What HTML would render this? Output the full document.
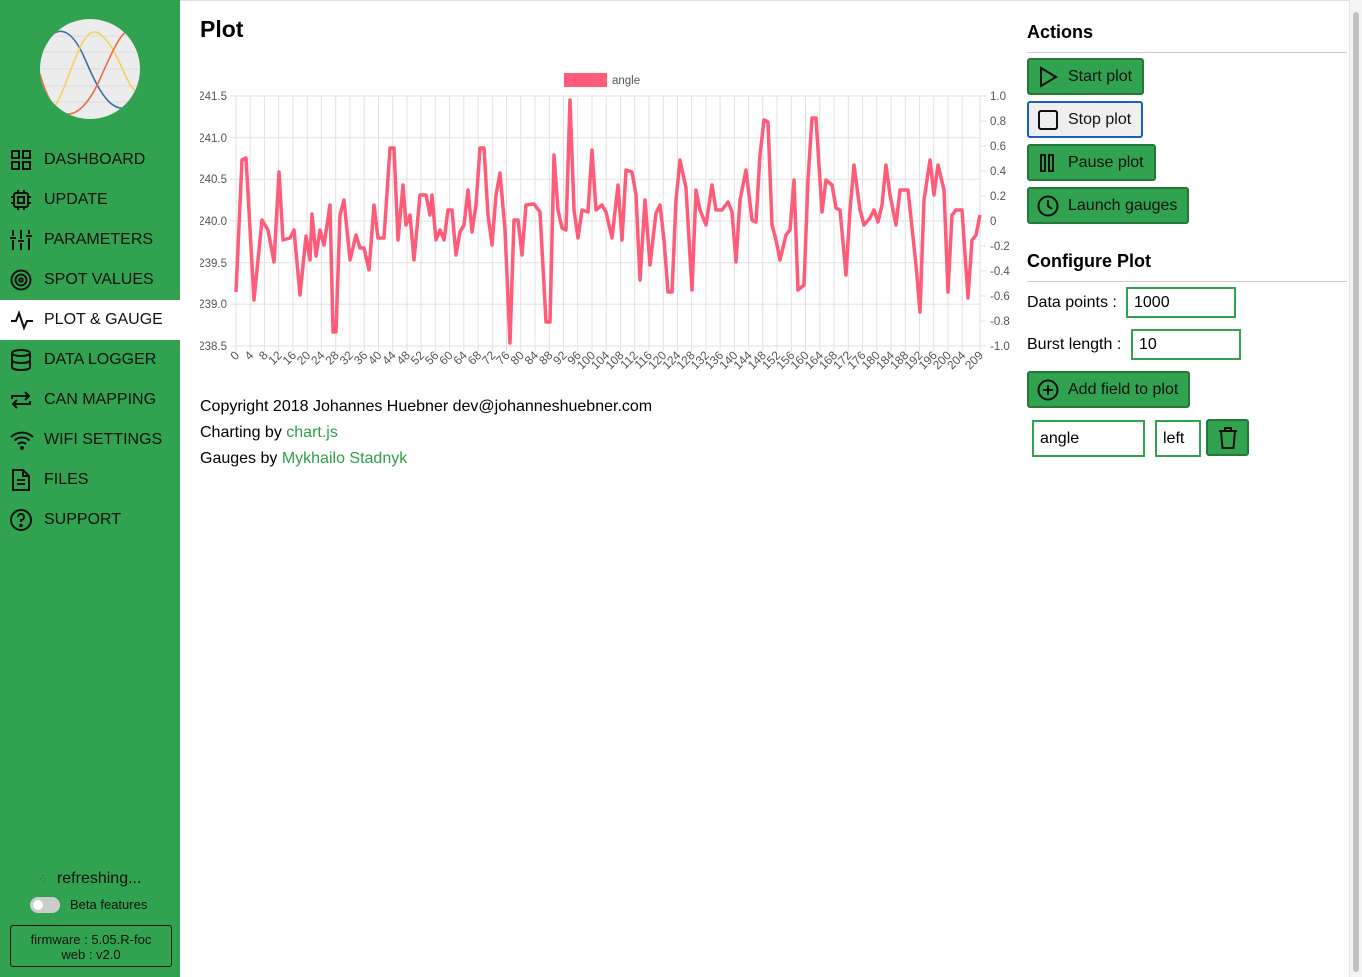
<!DOCTYPE html>
<html><head><meta charset="utf-8"><style>
*{box-sizing:border-box;margin:0;padding:0}
body{width:1362px;height:977px;overflow:hidden;background:#fff;font-family:"Liberation Sans",sans-serif;color:#000;position:relative}
#side{position:absolute;left:0;top:0;width:180px;height:977px;background:#31a350}
.logo{position:absolute;left:40px;top:19px;width:100px;height:100px;border-radius:50%;background:#ececec;overflow:hidden}
.nav{position:absolute;left:0;width:180px;height:40px;font-size:16px;line-height:40px;padding-left:44px;color:#111;white-space:nowrap}
.nav svg{position:absolute;left:10px;top:9px}
.nav.act{background:#fff}
a{color:#2e9e4a;text-decoration:none}
h1{position:absolute;left:200px;top:16px;font-size:23px;font-weight:bold}
h2{position:absolute;left:1027px;font-size:18px;font-weight:bold}
.hr{position:absolute;left:1027px;width:320px;height:1px;background:#ccc}
.btn{position:absolute;left:1027px;height:37px;background:#31a350;border:2px solid #25773a;border-radius:3px;font-size:16px;line-height:33px;padding-left:39px;color:#111;white-space:nowrap}
.btn svg{position:absolute;left:8px;top:6px}
.inp{position:absolute;height:31px;border:2px solid #31a350;font-size:16px;line-height:27px;padding-left:6px;background:#fff}
.lbl{position:absolute;font-size:16px}
.ft{position:absolute;left:200px;font-size:16px}
</style></head><body>
<div id="side">
 <div class="logo"><svg width="100" height="100" viewBox="0 0 100 100">
 <g stroke="#ddd" stroke-width="1"><line x1="0" y1="17" x2="100" y2="17"/><line x1="0" y1="33" x2="100" y2="33"/><line x1="0" y1="50" x2="100" y2="50"/><line x1="0" y1="67" x2="100" y2="67"/><line x1="0" y1="83" x2="100" y2="83"/></g>
 <path d="M0,30 C15,5 30,5 45,40 S75,105 100,80" fill="none" stroke="#3e6fa8" stroke-width="1.6"/>
 <path d="M10,95 C30,70 40,0 60,15 S85,70 100,75" fill="none" stroke="#f5d25a" stroke-width="1.6"/>
 <path d="M0,55 C15,110 40,105 60,60 S85,5 100,15" fill="none" stroke="#f06a4a" stroke-width="1.6"/>
 </svg></div>
 <div class="nav" style="top:140px"><svg width="22" height="22" viewBox="0 0 22 22" fill="none" stroke="#111" stroke-width="2"><rect x="2" y="2" width="7" height="7"/><rect x="13" y="2" width="7" height="7"/><rect x="2" y="13" width="7" height="7"/><rect x="13" y="13" width="7" height="7"/></svg>DASHBOARD</div>
 <div class="nav" style="top:180px"><svg width="22" height="22" viewBox="0 0 22 22" fill="none" stroke="#111" stroke-width="2"><rect x="4" y="4" width="14" height="14" rx="2"/><rect x="8" y="8" width="6" height="6"/><path d="M8 1v3M14 1v3M8 18v3M14 18v3M1 8h3M1 14h3M18 8h3M18 14h3"/></svg>UPDATE</div>
 <div class="nav" style="top:220px"><svg width="22" height="22" viewBox="0 0 22 22" fill="none" stroke="#111" stroke-width="2"><path d="M3 1v6M3 11v10M11 1v9M11 14v7M19 1v4M19 9v12M0 9h6M8 12h6M16 7h6"/></svg>PARAMETERS</div>
 <div class="nav" style="top:260px"><svg width="22" height="22" viewBox="0 0 22 22" fill="none" stroke="#111" stroke-width="2"><circle cx="11" cy="11" r="9.5"/><circle cx="11" cy="11" r="5.5"/><circle cx="11" cy="11" r="1.8"/></svg>SPOT VALUES</div>
 <div class="nav act" style="top:300px"><svg width="24" height="22" viewBox="0 0 24 22" fill="none" stroke="#111" stroke-width="2"><path d="M1 12h5l3-8 5 15 3-7h6"/></svg>PLOT &amp; GAUGE</div>
 <div class="nav" style="top:340px"><svg width="22" height="22" viewBox="0 0 22 22" fill="none" stroke="#111" stroke-width="2"><ellipse cx="11" cy="4" rx="9" ry="3"/><path d="M2 4v14c0 2 4 3 9 3s9-1 9-3V4M2 11c0 2 4 3 9 3s9-1 9-3"/></svg>DATA LOGGER</div>
 <div class="nav" style="top:380px"><svg width="22" height="22" viewBox="0 0 22 22" fill="none" stroke="#111" stroke-width="2"><path d="M2 10V7h17M15 3l4 4-4 4M20 12v3H3M7 19l-4-4 4-4"/></svg>CAN MAPPING</div>
 <div class="nav" style="top:420px"><svg width="24" height="22" viewBox="0 0 24 22" fill="none" stroke="#111" stroke-width="2"><path d="M1 8a16 16 0 0 1 22 0M4.5 11.5a11 11 0 0 1 15 0M8 15a6 6 0 0 1 8 0"/><circle cx="12" cy="19" r="1" fill="#111"/></svg>WIFI SETTINGS</div>
 <div class="nav" style="top:460px"><svg width="22" height="22" viewBox="0 0 22 22" fill="none" stroke="#111" stroke-width="2"><path d="M3 1h10l6 6v14H3zM13 1v6h6M7 11h8M7 15h8"/></svg>FILES</div>
 <div class="nav" style="top:500px"><svg width="22" height="22" viewBox="0 0 22 22" fill="none" stroke="#111" stroke-width="2"><circle cx="11" cy="11" r="10"/><path d="M8 8a3 3 0 1 1 3 3v2"/><circle cx="11" cy="16.5" r="0.8" fill="#111"/></svg>SUPPORT</div>
 <div style="position:absolute;left:38px;top:870px;font-size:16px;color:#111"><span style="font-size:12px;color:#555">⁘</span>&nbsp; refreshing...</div>
 <div style="position:absolute;left:30px;top:897px;width:30px;height:16px;border-radius:8px;background:#ccc"><div style="position:absolute;left:3px;top:3px;width:10px;height:10px;border-radius:50%;background:#fff"></div></div>
 <div style="position:absolute;left:70px;top:897px;font-size:13px;color:#111">Beta features</div>
 <div style="position:absolute;left:10px;top:925px;width:162px;height:42px;border:1px solid #111;border-radius:3px;font-size:13px;text-align:center;line-height:15px;padding-top:6px;color:#111">firmware : 5.05.R-foc<br>web : v2.0</div>
</div>
<div style="position:absolute;left:180px;top:0;width:1170px;height:1px;background:#ddd"></div>
<div style="position:absolute;left:1349px;top:0;width:13px;height:977px;background:#f5f5f5;border-left:1px solid #e5e5e5"><div style="position:absolute;left:3px;top:12px;width:6px;height:960px;border-radius:3px;background:#c2c2c2"></div></div>
<h1>Plot</h1>
<svg style="position:absolute;left:200px;top:60px" width="820" height="320" viewBox="200 60 820 320" font-family="Liberation Sans,sans-serif" font-size="11.5" fill="#555">
<rect x="564" y="73" width="43" height="14" fill="#ff5c7a"/><text x="612" y="84">angle</text>
<g stroke="#e2e2e2" stroke-width="1">
<line x1="236" y1="96" x2="980" y2="96"/><line x1="236" y1="137.7" x2="980" y2="137.7"/><line x1="236" y1="179.3" x2="980" y2="179.3"/><line x1="236" y1="221" x2="980" y2="221"/><line x1="236" y1="262.7" x2="980" y2="262.7"/><line x1="236" y1="304.3" x2="980" y2="304.3"/><line x1="236" y1="346" x2="980" y2="346"/>
<path d="M236 96V352M250.2 96V352M264.5 96V352M278.7 96V352M293 96V352M307.2 96V352M321.4 96V352M335.7 96V352M349.9 96V352M364.2 96V352M378.4 96V352M392.6 96V352M406.9 96V352M421.1 96V352M435.3 96V352M449.6 96V352M463.8 96V352M478.1 96V352M492.3 96V352M506.5 96V352M520.8 96V352M535 96V352M549.3 96V352M563.5 96V352M577.7 96V352M592 96V352M606.2 96V352M620.5 96V352M634.7 96V352M648.9 96V352M663.2 96V352M677.4 96V352M691.6 96V352M705.9 96V352M720.1 96V352M734.4 96V352M748.6 96V352M762.8 96V352M777.1 96V352M791.3 96V352M805.6 96V352M819.8 96V352M834 96V352M848.3 96V352M862.5 96V352M876.7 96V352M891 96V352M905.2 96V352M919.5 96V352M933.7 96V352M947.9 96V352M962.2 96V352M980 96V352"/>
<path d="M230 96h6M230 137.7h6M230 179.3h6M230 221h6M230 262.7h6M230 304.3h6M230 346h6M980 96h6M980 121h6M980 146h6M980 171h6M980 196h6M980 221h6M980 246h6M980 271h6M980 296h6M980 321h6M980 346h6"/>
</g>
<g text-anchor="end"><text x="227" y="100">241.5</text><text x="227" y="142">241.0</text><text x="227" y="183">240.5</text><text x="227" y="225">240.0</text><text x="227" y="267">239.5</text><text x="227" y="308">239.0</text><text x="227" y="350">238.5</text></g>
<g><text x="990" y="100">1.0</text><text x="990" y="125">0.8</text><text x="990" y="150">0.6</text><text x="990" y="175">0.4</text><text x="990" y="200">0.2</text><text x="990" y="225">0</text><text x="990" y="250">-0.2</text><text x="990" y="275">-0.4</text><text x="990" y="300">-0.6</text><text x="990" y="325">-0.8</text><text x="990" y="350">-1.0</text></g>
<g text-anchor="end" font-size="12">
<text transform="translate(240,356) rotate(-45)">0</text><text transform="translate(254.2,356) rotate(-45)">4</text><text transform="translate(268.5,356) rotate(-45)">8</text><text transform="translate(282.7,356) rotate(-45)">12</text><text transform="translate(297,356) rotate(-45)">16</text><text transform="translate(311.2,356) rotate(-45)">20</text><text transform="translate(325.4,356) rotate(-45)">24</text><text transform="translate(339.7,356) rotate(-45)">28</text><text transform="translate(353.9,356) rotate(-45)">32</text><text transform="translate(368.2,356) rotate(-45)">36</text><text transform="translate(382.4,356) rotate(-45)">40</text><text transform="translate(396.6,356) rotate(-45)">44</text><text transform="translate(410.9,356) rotate(-45)">48</text><text transform="translate(425.1,356) rotate(-45)">52</text><text transform="translate(439.3,356) rotate(-45)">56</text><text transform="translate(453.6,356) rotate(-45)">60</text><text transform="translate(467.8,356) rotate(-45)">64</text><text transform="translate(482.1,356) rotate(-45)">68</text><text transform="translate(496.3,356) rotate(-45)">72</text><text transform="translate(510.5,356) rotate(-45)">76</text><text transform="translate(524.8,356) rotate(-45)">80</text><text transform="translate(539,356) rotate(-45)">84</text><text transform="translate(553.3,356) rotate(-45)">88</text><text transform="translate(567.5,356) rotate(-45)">92</text><text transform="translate(581.7,356) rotate(-45)">96</text><text transform="translate(596,356) rotate(-45)">100</text><text transform="translate(610.2,356) rotate(-45)">104</text><text transform="translate(624.5,356) rotate(-45)">108</text><text transform="translate(638.7,356) rotate(-45)">112</text><text transform="translate(652.9,356) rotate(-45)">116</text><text transform="translate(667.2,356) rotate(-45)">120</text><text transform="translate(681.4,356) rotate(-45)">124</text><text transform="translate(695.6,356) rotate(-45)">128</text><text transform="translate(709.9,356) rotate(-45)">132</text><text transform="translate(724.1,356) rotate(-45)">136</text><text transform="translate(738.4,356) rotate(-45)">140</text><text transform="translate(752.6,356) rotate(-45)">144</text><text transform="translate(766.8,356) rotate(-45)">148</text><text transform="translate(781.1,356) rotate(-45)">152</text><text transform="translate(795.3,356) rotate(-45)">156</text><text transform="translate(809.6,356) rotate(-45)">160</text><text transform="translate(823.8,356) rotate(-45)">164</text><text transform="translate(838,356) rotate(-45)">168</text><text transform="translate(852.3,356) rotate(-45)">172</text><text transform="translate(866.5,356) rotate(-45)">176</text><text transform="translate(880.7,356) rotate(-45)">180</text><text transform="translate(895,356) rotate(-45)">184</text><text transform="translate(909.2,356) rotate(-45)">188</text><text transform="translate(923.5,356) rotate(-45)">192</text><text transform="translate(937.7,356) rotate(-45)">196</text><text transform="translate(951.9,356) rotate(-45)">200</text><text transform="translate(966.2,356) rotate(-45)">204</text><text transform="translate(984,356) rotate(-45)">209</text>
</g>
<polyline fill="none" stroke="#ff5c7a" stroke-width="3.5" stroke-linejoin="round" points="236,292 242,160 246,158 254,300 262,220 268,230 274,262 279,172 283,240 290,238 294,230 300,295 306,236 310,260 312,214 316,256 320,230 324,245 330,205 333,332 336,332 340,215 344,200 350,260 356,235 360,248 364,248 369,270 374,205 378,238 384,238 390,148 394,148 398,240 403,185 406,225 410,215 414,260 420,195 426,195 430,215 432,195 436,240 440,230 444,240 448,210 452,210 456,255 460,232 464,225 468,190 472,232 476,205 480,148 484,148 488,215 492,245 496,195 500,173 505,230 510,343 514,220 518,220 522,255 526,205 534,204 540,212 546,322 550,322 554,155 558,210 562,228 566,230 570,100 574,210 578,238 582,210 588,212 592,150 596,210 602,205 606,212 612,238 618,185 622,240 626,170 632,172 636,195 640,280 645,200 650,265 656,213 660,205 664,240 668,292 672,292 676,200 680,160 686,188 692,290 696,190 700,210 706,225 712,185 716,210 722,210 728,202 732,212 736,262 740,200 746,170 752,220 756,222 760,155 764,120 768,122 772,225 776,240 780,260 786,235 790,230 794,180 798,290 804,285 808,180 812,118 816,118 822,212 826,180 832,185 836,208 840,210 846,275 850,210 854,165 860,210 864,225 870,218 874,210 878,222 882,205 886,165 890,195 896,225 900,190 908,190 916,265 920,312 924,200 930,160 934,195 938,165 944,190 948,292 952,215 956,210 962,210 968,298 972,240 976,235 980,215"/>
</svg>
<div class="ft" style="top:398px">Copyright 2018 Johannes Huebner dev@johanneshuebner.com</div>
<div class="ft" style="top:424px">Charting by <a>chart.js</a></div>
<div class="ft" style="top:450px">Gauges by <a>Mykhailo Stadnyk</a></div>

<h2 style="top:22px">Actions</h2>
<div class="hr" style="top:52px"></div>
<div class="btn" style="top:58px;width:117px"><svg width="22" height="22" viewBox="0 0 22 22" fill="none" stroke="#111" stroke-width="2"><path d="M4 2l15 9-15 9z"/></svg>Start plot</div>
<div class="btn" style="top:101px;width:116px;background:#efefef;border-color:#1a5fc4"><svg width="22" height="22" viewBox="0 0 22 22" fill="none" stroke="#111" stroke-width="2"><rect x="2" y="2" width="18" height="18" rx="2"/></svg>Stop plot</div>
<div class="btn" style="top:144px;width:129px"><svg width="22" height="22" viewBox="0 0 22 22" fill="none" stroke="#111" stroke-width="2"><rect x="4" y="3" width="4" height="16"/><rect x="12" y="3" width="4" height="16"/></svg>Pause plot</div>
<div class="btn" style="top:187px;width:162px"><svg width="22" height="22" viewBox="0 0 22 22" fill="none" stroke="#111" stroke-width="2"><circle cx="11" cy="11" r="9.5"/><path d="M11 5v6l4 3"/></svg>Launch gauges</div>
<h2 style="top:251px">Configure Plot</h2>
<div class="hr" style="top:281px"></div>
<div class="lbl" style="left:1027px;top:294px">Data points :</div>
<div class="inp" style="left:1126px;top:287px;width:110px">1000</div>
<div class="lbl" style="left:1027px;top:336px">Burst length :</div>
<div class="inp" style="left:1131px;top:329px;width:110px">10</div>
<div class="btn" style="top:371px;width:163px"><svg width="22" height="22" viewBox="0 0 22 22" fill="none" stroke="#111" stroke-width="2"><circle cx="11" cy="11" r="9.5"/><path d="M11 6v10M6 11h10"/></svg>Add field to plot</div>
<div class="inp" style="left:1032px;top:420px;width:113px;height:37px;line-height:33px">angle</div>
<div class="inp" style="left:1155px;top:420px;width:46px;height:37px;line-height:33px">left</div>
<div class="btn" style="left:1206px;top:419px;width:43px;padding:0"><svg style="left:9px;top:5px" width="22" height="24" viewBox="0 0 22 24" fill="none" stroke="#111" stroke-width="2"><path d="M2 5h18M8 5V2h6v3M4 5l1.5 17h11L18 5"/></svg></div>
</body></html>
